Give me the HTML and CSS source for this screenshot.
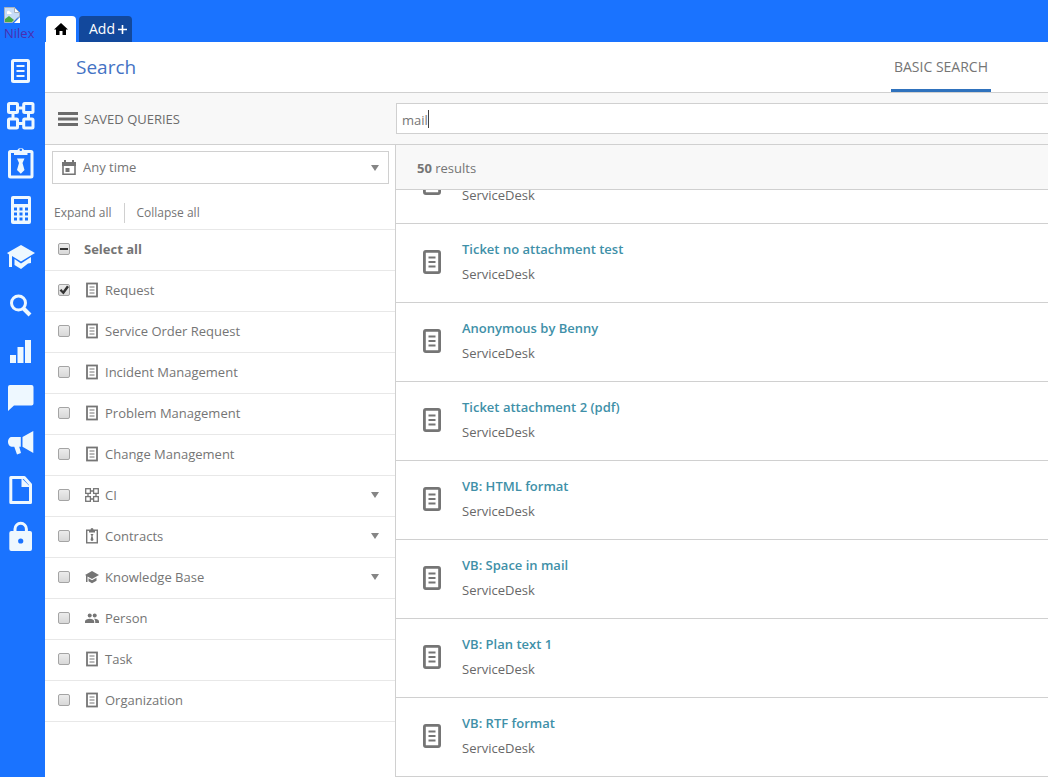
FILE: index.html
```
<!DOCTYPE html>
<html lang="en">
  <head>
    <meta charset="UTF-8" />
    <meta name="viewport" content="width=device-width, initial-scale=1.0" />
    <title>Search</title>
    <link rel="stylesheet" href="styles.css">
  </head>
  <body>
    <!-- Shared icons -->
    <svg class="sprite" aria-hidden="true">
      <symbol id="icon-doc" viewBox="0 0 18 24">
        <rect x="1.4" y="1.4" width="15.200" height="21.200" rx="1.500" fill="none" stroke="currentColor" stroke-width="2.800" />
        <path d="M5.500 7.500h7M5.500 12h7M5.500 16.500h7" stroke="currentColor" stroke-width="1.800" />
      </symbol>
      <symbol id="icon-doc-small" viewBox="0 0 14 16">
        <rect x="2" y="1.5" width="10" height="13" fill="none" stroke="currentColor" stroke-width="1.8" />
        <path d="M4.5 5h5M4.5 8h5M4.5 11h5" stroke="currentColor" stroke-width="1" />
      </symbol>
      <symbol id="icon-caret" viewBox="0 0 8 6">
        <path d="M0 0h8L4 6z" fill="currentColor" />
      </symbol>
    </svg>

    <nav class="sidebar">
      <a class="logo" href="#">
        <svg width="16" height="16" viewBox="0 0 16 16">
          <path d="M.5.5h10l5 5v4l-3 2-4 4h-8z" fill="#c6dcf7" stroke="#a9b3bd" />
          <path d="M10.5.5v5h5z" fill="#fff" stroke="#a9b3bd" />
          <path d="M3 5.500a1.500 1.500 0 0 1 3-.5 1.500 1.500 0 0 1 1.500 2H3z" fill="#fff" />
          <path d="M1 15v-3l4-3 5 4-2 2z" fill="#4aa843" />
          <path d="M10 16l6-6v6z" fill="#fff" />
        </svg>
        <span>Nilex</span>
      </a>
      <a class="nav-item" href="#" aria-label="Requests">
        <svg viewBox="0 0 30 30">
          <rect x="6.500" y="6.500" width="16" height="21" rx="1" fill="none" stroke="currentColor" stroke-width="3" />
          <path d="M10.500 12h8M10.500 17h8M10.500 22h8" stroke="currentColor" stroke-width="2" />
        </svg>
      </a>
      <a class="nav-item" href="#" aria-label="CI">
        <svg viewBox="0 0 30 30">
          <g fill="none" stroke="currentColor" stroke-width="3">
            <rect x="2.500" y="2.500" width="9" height="9" rx="1" />
            <rect x="17.700" y="2.500" width="9.300" height="9" rx="1" />
            <rect x="2.500" y="18" width="9" height="9" rx="1" />
            <rect x="17.700" y="18" width="9.300" height="9" rx="1" />
            <path d="M12 7h5M12 22.500h5M7 12v5M22.500 12v5" />
          </g>
        </svg>
      </a>
      <a class="nav-item" href="#" aria-label="Contracts">
        <svg viewBox="0 0 30 30">
          <rect x="3.500" y="3.500" width="22.500" height="25.500" rx="1" fill="none" stroke="currentColor" stroke-width="3" />
          <path d="M8 7V3h3a4 4.500 0 0 1 7.500 0h3v4z" fill="currentColor" />
          <circle cx="14.800" cy="1.800" r="1.300" fill="#1a73ff" />
          <path d="M11 10.500h7.500l-2 4.500 2 7-3.700 3.700-3.800-3.700 2-7z" fill="currentColor" />
        </svg>
      </a>
      <a class="nav-item" href="#" aria-label="Calculator">
        <svg viewBox="0 0 30 30">
          <rect x="5" y="1" width="20" height="28" rx="2" fill="currentColor" />
          <path d="M8 4h14v5H8zM8 12.500h3v3H8zM13.500 12.500h3v3h-3zM19 12.500h3v3h-3zM8 17.500h3v3H8zM13.500 17.500h3v3h-3zM19 17.500h3v3h-3zM8 22.500h3v3H8zM13.500 22.500h3v3h-3zM19 22.500h3v3h-3z" fill="#1a73ff" />
        </svg>
      </a>
      <a class="nav-item" href="#" aria-label="Knowledge Base">
        <svg viewBox="0 0 30 30">
          <path d="M1 11l14-8 14 8-14 8.500L6 14v11H3V12.500zM8.500 17l6.500 4.500 10-6.500v6l-3 .500L15 27l-6.500-4z" fill="currentColor" />
        </svg>
      </a>
      <a class="nav-item" href="#" aria-label="Search">
        <svg viewBox="0 0 30 30">
          <circle cx="12.500" cy="14" r="7" fill="none" stroke="currentColor" stroke-width="3" />
          <path d="M17.500 19.500l6.500 6.500" stroke="currentColor" stroke-width="4" />
        </svg>
      </a>
      <a class="nav-item" href="#" aria-label="Reports">
        <svg viewBox="0 0 30 30">
          <path d="M4 19h6v8H4zM11.500 11h6v16h-6zM19 4h6v23h-6z" fill="currentColor" />
        </svg>
      </a>
      <a class="nav-item" href="#" aria-label="Chat">
        <svg viewBox="0 0 30 30">
          <path d="M4 2h21.500a2 2 0 0 1 2 2v16.500a2 2 0 0 1-2 2H8L2 28V4a2 2 0 0 1 2-2z" fill="currentColor" />
        </svg>
      </a>
      <a class="nav-item" href="#" aria-label="News">
        <svg viewBox="0 0 30 30">
          <path d="M27.300 1v22L16.500 16.700V7zM5.500 7h9.300v9.700H5.500a3.500 4.800 0 0 1 0-9.700zM8 16h5l2 7-4 1.500z" fill="currentColor" />
        </svg>
      </a>
      <a class="nav-item" href="#" aria-label="Documents">
        <svg viewBox="0 0 30 30">
          <path d="M4.800.5h13.500l6.200 7V25.500H4.800z" fill="none" stroke="currentColor" stroke-width="3" stroke-linejoin="round" />
          <path d="M15.500 1v9h9z" fill="currentColor" />
        </svg>
      </a>
      <a class="nav-item" href="#" aria-label="Security">
        <svg viewBox="0 0 30 30">
          <path d="M9 9V5a5.700 5.700 0 0 1 11.400 0v4" fill="none" stroke="currentColor" stroke-width="3" />
          <rect x="3.300" y="7" width="22.700" height="20" rx="2" fill="currentColor" />
          <circle cx="14.700" cy="17" r="2.600" fill="#1a73ff" />
        </svg>
      </a>
    </nav>

    <div class="page">
      <header class="tabs">
        <a class="tab tab-home" href="#" aria-label="Home">
          <svg width="14" height="12" viewBox="0 0 14 12">
            <path d="M7 0l7 6.500h-2V12H8.500V8h-3v4H2V6.500H0z" fill="#000" />
          </svg>
        </a>
        <button class="tab tab-add" type="button">Add
          <svg width="9" height="9" viewBox="0 0 9 9">
            <path d="M4.500 0v9M0 4.500h9" stroke="#fff" stroke-width="1.600" />
          </svg>
        </button>
      </header>

      <div class="title-bar">
        <h1>Search</h1>
        <a class="mode" href="#">BASIC SEARCH</a>
      </div>

      <div class="toolbar">
        <button class="saved" type="button">
          <svg width="20" height="14" viewBox="0 0 20 14">
            <path d="M0 1.500h20M0 7h20M0 12.500h20" stroke="currentColor" stroke-width="3" />
          </svg>
          SAVED QUERIES
        </button>
        <input class="query" id="query" type="text" value="mail" aria-label="Search text" autofocus />
      </div>

      <div class="content">
        <aside class="filters">
          <div class="time-filter">
            <svg class="calendar" width="14" height="16" viewBox="0 0 14 16">
              <path d="M1 4v10.200h12V4" fill="none" stroke="currentColor" stroke-width="1.600" />
              <path d="M0 2h2V0h2v2h6V0h2v2h2v4H0zM3.500 8h4v4h-4z" fill="currentColor" />
            </svg>
            <select aria-label="Time period">
              <option>Any time</option>
            </select>
            <svg class="caret"><use href="#icon-caret" /></svg>
          </div>

          <div class="expand-links">
            <a href="#">Expand all</a>
            <a href="#">Collapse all</a>
          </div>

          <ul class="filter-list">
            <li>
              <input type="checkbox" id="all" />
              <label for="all"><b>Select all</b></label>
            </li>
            <li>
              <input type="checkbox" id="request" checked />
              <label for="request"><svg><use href="#icon-doc-small" /></svg>Request</label>
            </li>
            <li>
              <input type="checkbox" id="service" />
              <label for="service"><svg><use href="#icon-doc-small" /></svg>Service Order Request</label>
            </li>
            <li>
              <input type="checkbox" id="incident" />
              <label for="incident"><svg><use href="#icon-doc-small" /></svg>Incident Management</label>
            </li>
            <li>
              <input type="checkbox" id="problem" />
              <label for="problem"><svg><use href="#icon-doc-small" /></svg>Problem Management</label>
            </li>
            <li>
              <input type="checkbox" id="change" />
              <label for="change"><svg><use href="#icon-doc-small" /></svg>Change Management</label>
            </li>
            <li>
              <input type="checkbox" id="ci" />
              <label for="ci">
                <svg viewBox="0 0 14 16">
                  <g fill="none" stroke="currentColor" stroke-width="1.300">
                    <rect x=".7" y="1.700" width="4.700" height="4.700" />
                    <rect x="8.600" y="1.700" width="4.700" height="4.700" />
                    <rect x=".7" y="9.600" width="4.700" height="4.700" />
                    <rect x="8.600" y="9.600" width="4.700" height="4.700" />
                    <path d="M5 4h4M5 12h4M3 6v4M11 6v4" />
                  </g>
                </svg>CI
              </label>
              <svg class="caret"><use href="#icon-caret" /></svg>
            </li>
            <li>
              <input type="checkbox" id="contracts" />
              <label for="contracts">
                <svg viewBox="0 0 14 16">
                  <rect x="1.700" y="2.200" width="10.600" height="12.600" fill="none" stroke="currentColor" stroke-width="1.400" />
                  <path d="M4 4.500V2h1.500a1.500 2 0 0 1 3 0H10v2.500zM5.500 6h3l-1 2 1 4L7 13.200 5.500 12l1-4z" fill="currentColor" />
                </svg>Contracts
              </label>
              <svg class="caret"><use href="#icon-caret" /></svg>
            </li>
            <li>
              <input type="checkbox" id="knowledge" />
              <label for="knowledge">
                <svg viewBox="0 0 14 16">
                  <path d="M0 6l7-4 7 4-7 4-4.500-2.500V13H1V6.500zM3.500 9.200L7 11.200l4.500-2.500v3L7 14.200l-3.500-2z" fill="currentColor" />
                </svg>Knowledge Base
              </label>
              <svg class="caret"><use href="#icon-caret" /></svg>
            </li>
            <li>
              <input type="checkbox" id="person" />
              <label for="person">
                <svg viewBox="0 0 14 16">
                  <circle cx="4.700" cy="5.500" r="2" fill="currentColor" />
                  <circle cx="9.700" cy="5.500" r="2" fill="currentColor" />
                  <path d="M0 13v-1.500C0 9.700 2.500 8.700 4.700 8.700s4.500 1 4.500 2.800V13zM10.200 13v-1.500c0-1.200-.5-2-1.300-2.700 2.500-.3 5.100.8 5.100 2.700V13z" fill="currentColor" />
                </svg>Person
              </label>
            </li>
            <li>
              <input type="checkbox" id="task" />
              <label for="task"><svg><use href="#icon-doc-small" /></svg>Task</label>
            </li>
            <li>
              <input type="checkbox" id="organization" />
              <label for="organization"><svg><use href="#icon-doc-small" /></svg>Organization</label>
            </li>
          </ul>
        </aside>

        <main class="results">
          <div class="results-count"><b>50</b> results</div>
          <div class="results-list" id="results-list"></div>
        </main>
      </div>
    </div>

    <script>
      const list = document.getElementById("results-list");
      const query = document.getElementById("query");

      const results = [
        "",
        "Ticket no attachment test",
        "Anonymous by Benny",
        "Ticket attachment 2 (pdf)",
        "VB: HTML format",
        "VB: Space in mail",
        "VB: Plan text 1",
        "VB: RTF format",
      ];

      results.forEach((title) => {
        const row = document.createElement("article");
        row.classList.add("result");
        row.innerHTML = `
          <svg><use href="#icon-doc" /></svg>
          <div>
            <h2>${title ? `<a href="#">${title}</a>` : ""}</h2>
            <p>ServiceDesk</p>
          </div>
        `;
        list.appendChild(row);
      });

      // Some of the types are ticked, so "Select all" is mixed
      document.getElementById("all").indeterminate = true;

      // Show the end of the list
      list.scrollTop = list.scrollHeight;

      query.focus();
      query.setSelectionRange(4, 4);
    </script>
  </body>
</html>
```

FILE: styles.css
```
* {
  box-sizing: border-box;
}

body {
  display: flex;
  height: 100vh;
  margin: 0;
  background-color: #fff;
  color: #757575;
  font-family: "Open Sans", "Noto Sans", sans-serif;
  font-size: 13px;
  line-height: 20px;
}

a {
  color: inherit;
  text-decoration: none;
}

button,
input,
select {
  font: inherit;
  color: inherit;
}

.sprite {
  position: absolute;
  width: 0;
  height: 0;
}

/* Sidebar */
.sidebar {
  flex: none;
  width: 45px;
  background-color: #1a73ff;
  color: #eef8ff;
}

.logo {
  display: block;
  height: 45px;
  padding: 7px 0 0 4px;
  color: #4a2fb0;
}

.logo svg {
  display: block;
}

.nav-item {
  display: flex;
  align-items: center;
  height: 47px;
  padding-left: 6px;
}

.nav-item svg {
  width: 30px;
  height: 30px;
  overflow: visible;
}

/* Top of the page */
.page {
  flex: 1;
  min-width: 0;
  display: flex;
  flex-direction: column;
}

.tabs {
  display: flex;
  align-items: flex-end;
  gap: 3px;
  height: 42px;
  padding-left: 1px;
  background-color: #1a73ff;
}

.tab {
  display: flex;
  align-items: center;
  justify-content: center;
  height: 26px;
  border: none;
  border-radius: 4px 4px 0 0;
}

.tab-home {
  width: 30px;
  background-color: #fff;
}

.tab-add {
  gap: 3px;
  padding: 0 5px 0 10px;
  background-color: #12489c;
  color: #fff;
  font-size: 14px;
}

.title-bar {
  display: flex;
  justify-content: space-between;
  height: 51px;
  padding: 0 57px 0 31px;
  border-bottom: 1px solid #d0d0d0;
}

.title-bar h1 {
  margin: 0;
  color: #4472c4;
  font-size: 19px;
  font-weight: 400;
  line-height: 50px;
}

.mode {
  padding: 0 3px;
  border-bottom: 3px solid #2f72bd;
  font-size: 14px;
  line-height: 50px;
}

.toolbar {
  display: flex;
  align-items: center;
  height: 52px;
  background-color: #f8f8f8;
  border-bottom: 1px solid #d0d0d0;
}

.saved {
  display: flex;
  align-items: center;
  gap: 6px;
  width: 351px;
  padding: 0 0 0 13px;
  border: none;
  background: none;
  color: #6c6c6c;
}

.query {
  flex: 1;
  min-width: 0;
  height: 31px;
  padding: 2px 5px 0;
  border: 1px solid #d0d0d0;
  border-right: none;
  /* Text cursor after the query */
  background: linear-gradient(#444, #444) 31px 6px / 1px 18px no-repeat #fff;
  caret-color: transparent;
  outline: none;
}

.content {
  flex: 1;
  display: flex;
  min-height: 0;
}

/* Filters */
.filters {
  flex: none;
  width: 351px;
  padding: 6px 0 0;
  border-right: 1px solid #d0d0d0;
}

.time-filter {
  position: relative;
  margin: 0 6px 0 7px;
}

.time-filter select {
  display: block;
  width: 100%;
  height: 33px;
  padding: 0 30px 2px 30px;
  appearance: none;
  border: 1px solid #d0d0d0;
  border-radius: 0;
  background-color: #fff;
}

.calendar {
  position: absolute;
  top: 9px;
  left: 10px;
}

.time-filter .caret {
  position: absolute;
  top: 14px;
  right: 10px;
}

.caret {
  width: 8px;
  height: 6px;
  color: #858585;
}

.expand-links {
  display: flex;
  padding: 19px 9px 6px;
  font-size: 12px;
}

.expand-links a + a {
  margin-left: 12px;
  padding-left: 12px;
  border-left: 1px solid #d0d0d0;
}

.filter-list {
  margin: 0;
  padding: 0;
  list-style: none;
  border-top: 1px solid #e8e8e8;
}

.filter-list li {
  display: flex;
  align-items: center;
  height: 41px;
  padding: 0 16px 2px 13px;
  border-bottom: 1px solid #e8e8e8;
}

.filter-list label {
  flex: 1;
  display: flex;
  align-items: center;
  gap: 6px;
}

.filter-list label svg {
  width: 14px;
  height: 16px;
  margin-left: 1px;
}

.filter-list input {
  display: grid;
  place-items: center;
  width: 12px;
  height: 12px;
  margin: 0 14px 0 0;
  appearance: none;
  border: 1px solid #a4a4a4;
  border-radius: 2px;
  background: linear-gradient(#ececec, #d8d8d8);
}

.filter-list input:checked::before {
  content: "";
  width: 10px;
  height: 10px;
  background-color: #333;
  clip-path: polygon(5% 55%, 25% 40%, 40% 60%, 80% 5%, 100% 20%, 45% 95%);
}

.filter-list input:indeterminate::before {
  content: "";
  width: 8px;
  height: 2px;
  background-color: #333;
}

/* Results */
.results {
  flex: 1;
  min-width: 0;
  display: flex;
  flex-direction: column;
}

.results-count {
  height: 45px;
  padding: 13px 21px 0;
  background-color: #f8f8f8;
  border-bottom: 1px solid #d0d0d0;
}

.results-list {
  flex: 1;
  min-height: 0;
  overflow-y: auto;
  scrollbar-width: none;
}

.result {
  display: flex;
  align-items: center;
  gap: 21px;
  height: 79px;
  padding: 0 0 2px 27px;
  border-bottom: 1px solid #d0d0d0;
}

.result svg {
  width: 18px;
  height: 24px;
}

.result h2 {
  height: 20px;
  margin: 0 0 5px;
  color: #4090a8;
  font-size: 13px;
  font-weight: 600;
}

.result p {
  margin: 0 0 2px;
  color: #686868;
}
```
